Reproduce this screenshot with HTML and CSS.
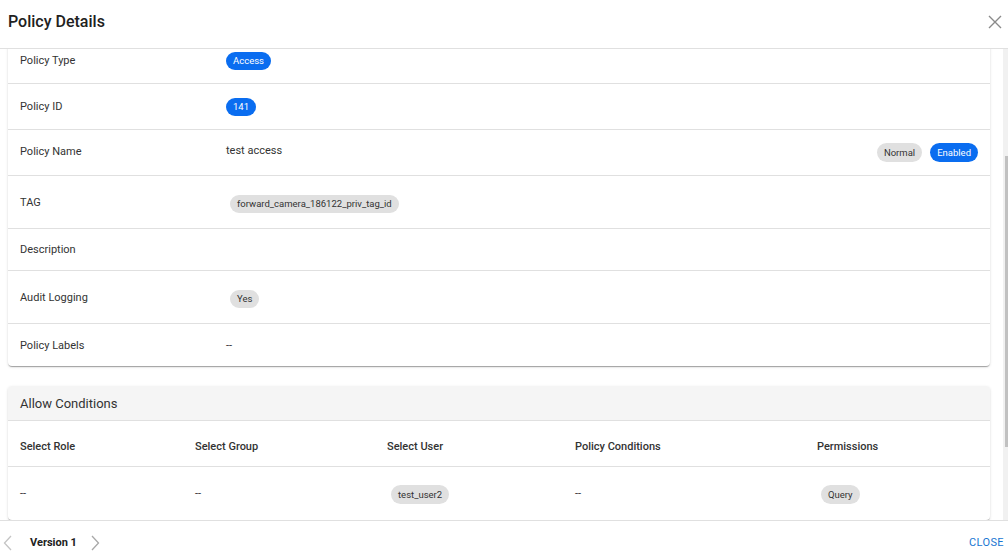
FILE: index.html
```html
<!DOCTYPE html>
<html>
<head>
<meta charset="utf-8">
<link rel="stylesheet" href="styles.css">
</head>
<body>
<div class="dialog">
  <header class="dlg-header">
    <h1 class="dlg-title">Policy Details</h1>
    <button class="icon-btn close-x" aria-label="close">
      <svg width="14" height="14" viewBox="0 0 14 14"><path d="M1 1L13 13M13 1L1 13" stroke="#8a8a8a" stroke-width="1.4" fill="none"/></svg>
    </button>
  </header>

  <div class="dlg-main">
    <div class="dlg-body" id="scroller">
      <section class="card">
        <div class="row h46" id="first-row"><div class="label">Policy Type</div><div class="value"><span class="chip blue">Access</span></div></div>
        <div class="row h46"><div class="label">Policy ID</div><div class="value"><span class="chip blue">141</span></div></div>
        <div class="row h46"><div class="label lift1">Policy Name</div><div class="value spread"><span class="plain lift">test access</span><span class="chips"><span class="chip gray">Normal</span><span class="chip blue">Enabled</span></span></div></div>
        <div class="row h53"><div class="label">TAG</div><div class="value"><span class="chip gray inset">forward_camera_186122_priv_tag_id</span></div></div>
        <div class="row h42"><div class="label">Description</div><div class="value"></div></div>
        <div class="row h53"><div class="label">Audit Logging</div><div class="value"><span class="chip gray inset">Yes</span></div></div>
        <div class="row h42 last"><div class="label">Policy Labels</div><div class="value"><span class="plain">--</span></div></div>
      </section>

      <section class="card gap">
        <div class="card-head">Allow Conditions</div>
        <div class="grid thead">
          <div class="cell">Select Role</div>
          <div class="cell">Select Group</div>
          <div class="cell">Select User</div>
          <div class="cell">Policy Conditions</div>
          <div class="cell">Permissions</div>
        </div>
        <div class="grid tbody">
          <div class="cell">--</div>
          <div class="cell">--</div>
          <div class="cell"><span class="chip gray inset tall">test_user2</span></div>
          <div class="cell">--</div>
          <div class="cell"><span class="chip gray inset tall">Query</span></div>
        </div>
      </section>
    </div>
    <div class="scrollbar"><div class="thumb" style="margin-top:107px;height:291px"></div></div>
  </div>

  <footer class="dlg-footer">
    <div class="versions">
      <span class="chev off"><svg width="10" height="16" viewBox="0 0 10 16"><path d="M8 1L1.5 8L8 15" stroke="#c4c4c4" stroke-width="1.3" fill="none"/></svg></span>
      <span class="ver">Version 1</span>
      <span class="chev"><svg width="10" height="16" viewBox="0 0 10 16"><path d="M2 1L8.5 8L2 15" stroke="#a8a8a8" stroke-width="1.3" fill="none"/></svg></span>
    </div>
    <button class="text-btn">CLOSE</button>
  </footer>
</div>
<script src="script.js"></script>
</body>
</html>
```

FILE: styles.css
```css
* { box-sizing: border-box; }
html, body { margin: 0; padding: 0; }
body {
  width: 1008px;
  height: 559px;
  overflow: hidden;
  font-family: Roboto, "Liberation Sans", Arial, sans-serif;
  color: #333;
  background: #fff;
}
.dialog {
  display: flex;
  flex-direction: column;
  height: 559px;
}
.dlg-header {
  height: 49px;
  flex: none;
  border-bottom: 1px solid #e0e0e0;
  display: flex;
  justify-content: space-between;
  align-items: flex-start;
  padding: 12px 6px 0 8px;
}
.dlg-title {
  margin: 0;
  font-size: 16px;
  line-height: 20px;
  font-weight: 500;
  color: #212121;
}
.icon-btn {
  border: 0;
  background: none;
  padding: 0;
  margin-top: 3px;
  cursor: pointer;
  line-height: 0;
}
.dlg-main {
  flex: 1;
  min-height: 0;
  display: flex;
}
.dlg-body {
  flex: 1;
  min-width: 0;
  position: relative;
  overflow: hidden;
  padding: 8px 13px 8px 8px;
}
.scrollbar {
  width: 5px;
  flex: none;
  background: #f1f1f1;
}
.thumb {
  width: 3px;
  margin-left: 2px;
  background: #c1c1c1;
}
.card {
  background: #fff;
  border-radius: 4px;
  box-shadow: 0 2px 1px -1px rgba(0,0,0,.2), 0 1px 1px 0 rgba(0,0,0,.14), 0 1px 3px 0 rgba(0,0,0,.12);
  overflow: hidden;
}
.card.gap { margin-top: 20px; }
.card-head {
  height: 35px;
  background: #f5f5f5;
  border-bottom: 1px solid #e0e0e0;
  display: flex;
  align-items: center;
  padding: 0 12px;
  font-size: 13px;
  color: #333;
}
.row {
  display: flex;
  align-items: center;
  border-bottom: 1px solid #e0e0e0;
  padding: 0 12px;
  font-size: 11px;
}
.row.last { border-bottom: 0; }
.h42 { height: 42px; }
.h46 { height: 46px; }
.h53 { height: 53px; }
.label { width: 206px; flex: none; color: #333; }
.lift1 { position: relative; top: -1px; }
.value { flex: 1; display: flex; align-items: center; }
.value.spread { justify-content: space-between; }
.plain { color: #333; }
.lift { position: relative; top: -2px; }
.chips { display: flex; gap: 8px; }
.chip {
  display: inline-flex;
  align-items: center;
  height: 18px;
  padding: 0 7px;
  border-radius: 9px;
  font-size: 9.5px;
  white-space: nowrap;
}
.chip.blue { background: #0a6df0; color: #fff; }
.chip.gray { background: #e0e0e0; color: #333; }
.chip.inset { margin-left: 4px; margin-top: 3px; }
.chip.tall { height: 19px; border-radius: 10px; margin-top: 3px; }
.chips .chip { height: 19px; border-radius: 10px; }
.grid {
  display: grid;
  grid-template-columns: 175px 192px 188px 242px 1fr;
  align-items: center;
  font-size: 11px;
}
.cell { padding-left: 12px; }
.thead {
  height: 46px;
  padding-top: 6px;
  border-bottom: 1px solid #e0e0e0;
  font-weight: 500;
  color: #333;
}
.tbody { height: 53px; padding-bottom: 1px; }
.dlg-footer {
  height: 39px;
  flex: none;
  border-top: 1px solid #e0e0e0;
  display: flex;
  align-items: center;
  justify-content: space-between;
  padding: 5px 4px 0 3px;
}
.versions { display: flex; align-items: center; }
.chev { line-height: 0; }
.ver {
  font-size: 11px;
  font-weight: 700;
  color: #212121;
  margin: 0 13px 0 17px;
}
.text-btn {
  border: 0;
  background: none;
  padding: 0;
  font-family: inherit;
  font-size: 11px;
  letter-spacing: 0.4px;
  color: #1976d2;
  cursor: pointer;
}
```

FILE: script.js
```js
(function () {
  var s = document.getElementById('scroller');
  var r = document.getElementById('first-row');
  s.scrollTop = r.offsetTop + 11;
})();
```
